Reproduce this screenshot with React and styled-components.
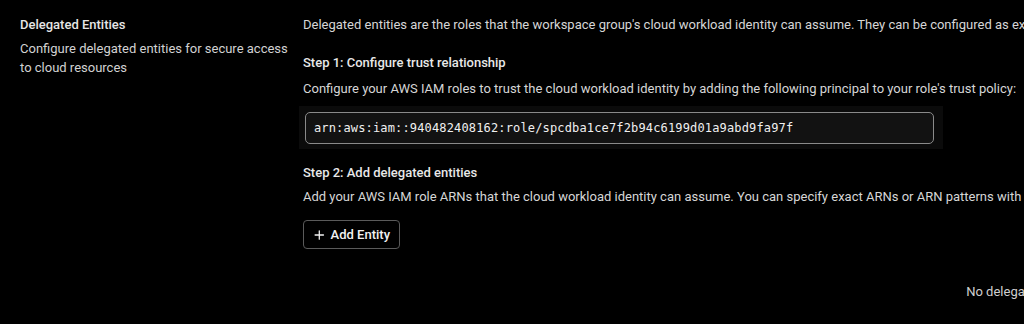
import React from "react"
import styled, { createGlobalStyle } from 'styled-components'

const Global = createGlobalStyle`
  body {
    margin: 0;
    background: #000;
    overflow: hidden;
    font-family: Roboto, "Liberation Sans", sans-serif;
    font-size: 13px;
    color: #d6d6d6;
  }
`;

const Page = styled.div`
  display: flex;
  align-items: flex-start;
  padding: 16px 0 0 20px;
  min-height: 324px;
  box-sizing: border-box;
`;

const Side = styled.div`
  width: 272px;
  flex-shrink: 0;
  margin-right: 11px;
`;

const Title = styled.div`
  font-weight: 500;
  color: #e6e6e6;
  line-height: 18px;
  margin-bottom: 5px;
`;

const SideText = styled.div`
  line-height: 19px;
  color: #d2d2d2;
`;

const Main = styled.div`
  width: 1520px;
  flex-shrink: 0;
  display: flex;
  flex-direction: column;
`;

const Text = styled.div`
  line-height: 18px;
  color: #d6d6d6;
  white-space: nowrap;
  margin-top: ${p => p.$top || 0}px;
`;

const Step = styled.div`
  font-weight: 500;
  color: #e8e8e8;
  line-height: 18px;
  margin-top: ${p => p.$top || 0}px;
`;

const CodeWrap = styled.div`
  width: 629px;
  margin: 8px 0 0 -4px;
  padding: 6px 9px 5px 6px;
  background: #0b0b0b;
`;

const Code = styled.div`
  height: 30px;
  display: flex;
  align-items: center;
  padding: 0 8px;
  border: 1px solid #8a8a8a;
  border-radius: 5px;
  background: #121212;
  font-family: "DejaVu Sans Mono", "Liberation Mono", monospace;
  font-size: 12px;
  color: #f0f0f0;
  letter-spacing: 0.15px;
`;

const Button = styled.button`
  align-self: flex-start;
  margin-top: 14px;
  height: 29px;
  width: 97px;
  display: flex;
  align-items: center;
  gap: 5px;
  padding: 0 9px;
  background: #000;
  border: 1px solid #5a5a5a;
  border-radius: 4px;
  color: #f2f2f2;
  font-family: Roboto, "Liberation Sans", sans-serif;
  font-size: 13px;
  font-weight: 500;
  white-space: nowrap;
`;

const Empty = styled.div`
  margin-top: 34px;
  padding-right: 6px;
  text-align: center;
  line-height: 18px;
  color: #cfcfcf;
`;

export default function App() {
  return (
    <>
      <Global />
      <Page>
        <Side>
          <Title>Delegated Entities</Title>
          <SideText>Configure delegated entities for secure access to cloud resources</SideText>
        </Side>
        <Main>
          <Text>Delegated entities are the roles that the workspace group's cloud workload identity can assume. They can be configured as exact ARNs or as ARN patterns with wildcards.</Text>
          <Step $top={20}>Step 1: Configure trust relationship</Step>
          <Text $top={8}>Configure your AWS IAM roles to trust the cloud workload identity by adding the following principal to your role's trust policy:</Text>
          <CodeWrap>
            <Code>arn:aws:iam::940482408162:role/spcdba1ce7f2b94c6199d01a9abd9fa97f</Code>
          </CodeWrap>
          <Step $top={15}>Step 2: Add delegated entities</Step>
          <Text $top={6}>Add your AWS IAM role ARNs that the cloud workload identity can assume. You can specify exact ARNs or ARN patterns with wildcards.</Text>
          <Button>
            <svg width="14" height="14" viewBox="0 0 24 24" fill="none" stroke="currentColor" strokeWidth="2.4" strokeLinecap="round">
              <path d="M12 4v16M4 12h16" />
            </svg>
            Add Entity
          </Button>
          <Empty>No delegated entities configured</Empty>
        </Main>
      </Page>
    </>
  )
}
